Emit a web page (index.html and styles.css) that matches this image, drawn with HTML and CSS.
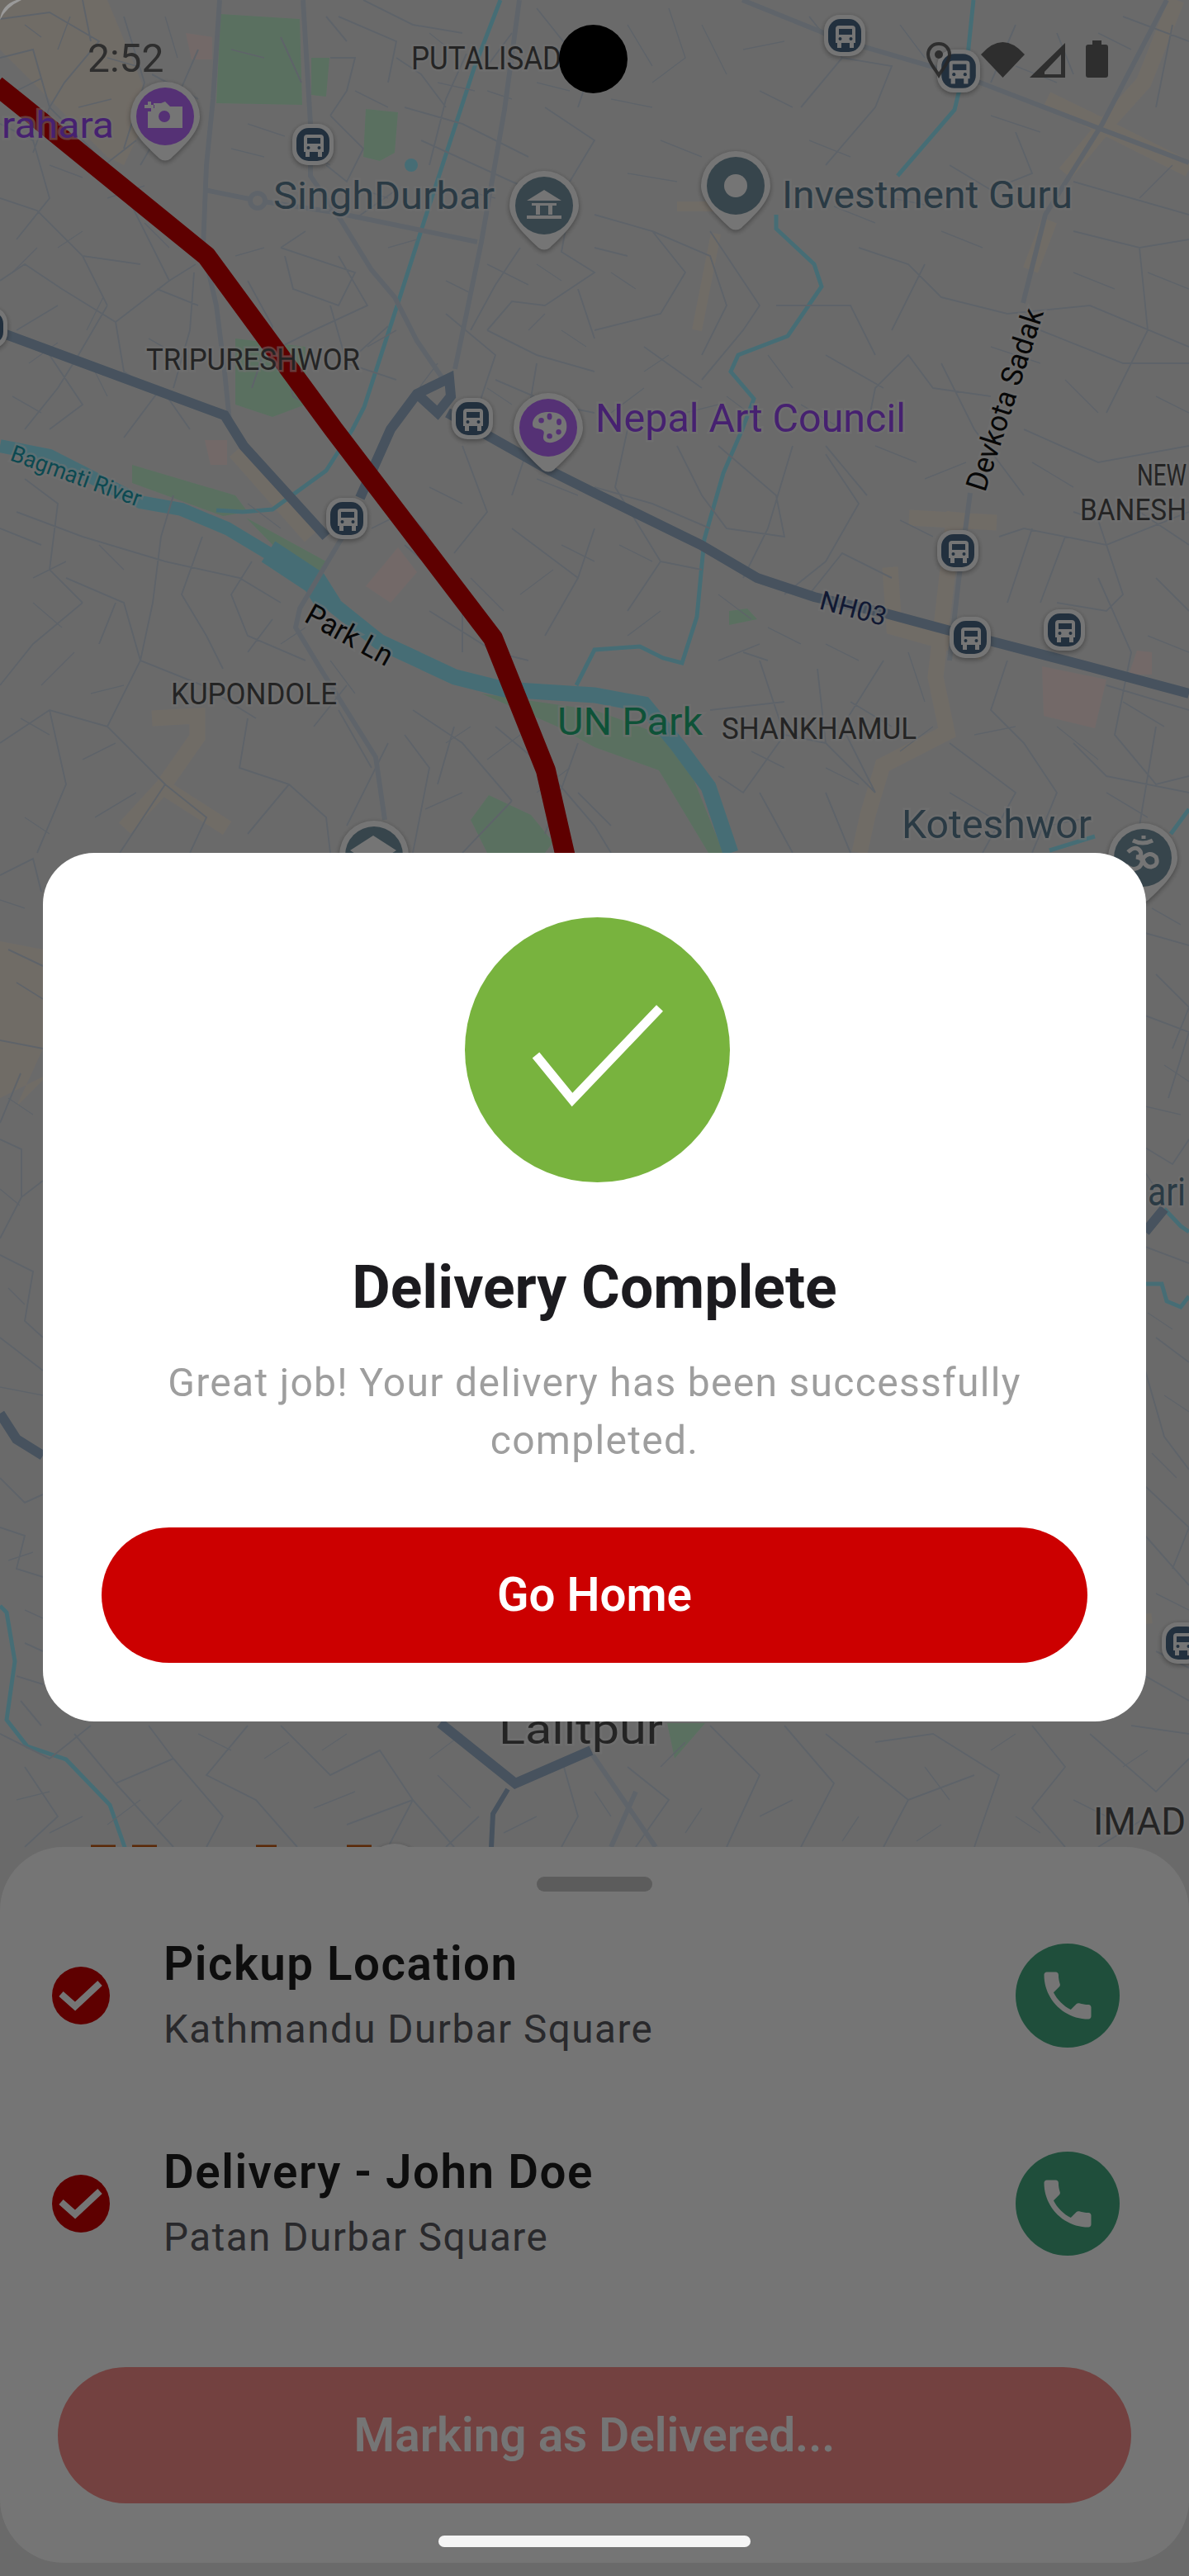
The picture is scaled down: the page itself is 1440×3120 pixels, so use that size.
FILE: index.html
```html
<!DOCTYPE html>
<html lang="en">
<head>
    <meta charset="UTF-8">
    <meta name="viewport" content="width=device-width, initial-scale=1.0">
    <title>Delivery Complete</title>
    <link rel="stylesheet" href="styles.css">
</head>
<body>

<div class="screen">

    <!-- map canvas: everything here sits at its place on the map -->
    <svg class="map" viewBox="0 0 1440 3120" width="1440" height="3120">
        <defs>
            <symbol id="bus" viewBox="0 0 50 50">
                <rect class="marker-ring" width="50" height="50" rx="19"/>
                <rect class="bus-fill" x="5" y="5" width="40" height="40" rx="15"/>
                <path class="marker-ring" d="M14 17q0-4 4-4h16q4 0 4 4v17h-2v6h-5v-6H21v6h-5v-6h-2z"/>
                <rect class="bus-fill" x="18" y="17" width="16" height="7"/>
                <circle class="bus-fill" cx="19.500" cy="29" r="2"/>
                <circle class="bus-fill" cx="32.500" cy="29" r="2"/>
            </symbol>
            <symbol id="pin-purple" viewBox="0 0 84 96">
                <path class="marker-ring" d="M42 0A42 42 0 0 1 84 42C84 62 60 82 49 93Q42 98 35 93C24 82 0 62 0 42A42 42 0 0 1 42 0Z"/>
                <circle class="pin-purple" cx="42" cy="42" r="35"/>
            </symbol>
            <symbol id="pin-slate" viewBox="0 0 84 96">
                <path class="marker-ring" d="M42 0A42 42 0 0 1 84 42C84 62 60 82 49 93Q42 98 35 93C24 82 0 62 0 42A42 42 0 0 1 42 0Z"/>
                <circle class="pin-slate" cx="42" cy="42" r="35"/>
            </symbol>
        </defs>

        <rect class="land" width="1440" height="3120"/>

        <!-- tan, green and pink areas -->
        <path class="area-tan" d="M0 0H130L184 130 150 200 130 190 60 120 0 60Z"/>
        <path class="area-tan" d="M0 1140L52 1150V1270L20 1340 60 1300 0 1330Z"/>
        <path class="street-tan wide" d="M1425 0L1385 100 1340 150 1290 210M1268 120L1340 155 1440 205M1271 267L1248 327M1101 627L1207 633M1156 620L1133 820 1147 887 1069 927 1051 987 1041 1033M1078 687L1083 760 1190 790M285 547L376 650M184 870L239 867 239 893 197 953 151 1003M197 953L275 1003"/>
        <path class="street-tan" d="M867 283L844 400M820 250L880 250M1395 1960L1350 1965"/>
        <path class="area-green" d="M267 17L363 23 366 127 262 125ZM443 132L482 136 478 185 460 195 440 190ZM377 70L399 70 395 117 377 115ZM285 410L370 420 370 490 330 505 285 490ZM160 563L285 600 300 620 270 625 160 585ZM298 627L395 680 385 695 340 670ZM583 840L720 860 821 897 876 1033H858L798 933 720 905 675 880ZM570 993L592 963 643 987 670 1020 660 1033H590ZM883 740L905 737 917 750 883 757ZM808 2087H854L817 2130Z"/>
        <path class="area-pink" d="M225 40L257 45 257 72 232 72ZM248 533L275 533 275 563 255 563ZM482 663L505 693 473 730 443 710ZM1262 807L1340 823 1326 882 1264 867ZM1377 788L1395 790 1395 817 1367 817Z"/>

        <!-- rivers -->
        <path class="river thin" d="M606 0L574 83 514 267 482 367 441 493 427 520 395 570 330 617 294 620 262 618M1179 0L1172 67 1156 133 1087 213M940 260V277L986 320 995 347 954 407 894 430 885 450 913 483 899 520 876 573 853 653 844 747 826 803 803 797 775 783 720 787 698 830M1440 980L1418 1010M1326 1013L1271 1030M1387 1555H1407L1413 1576 1430 1583 1440 1570M1410 1464L1430 1485 1440 1492M0 1945L8 1953 18 2012 8 2083 33 2115 80 2131 133 2186 152 2240"/>
        <path class="river" d="M0 540L60 552 170 608 220 617 275 640 330 673 381 705"/>
        <path class="river wide" d="M381 705L404 733 459 777 551 820 611 835 720 842 780 853 821 903 858 953 885 1033"/>
        <path class="river widest" d="M325 668L381 705 400 735"/>
        <circle class="river-fill" cx="498" cy="200" r="8"/>

        <!-- small streets -->
        <path class="road" d="M0 23L60 15 120 50 78 100 60 130M100 0L110 50M0 70L40 60 60 130 40 185M150 20L175 100 150 180M184 90L240 120M240 60L205 140 170 200M0 150L40 170 60 240 20 290M0 240L45 255 100 310 130 370M130 370L95 430 70 470 30 520M60 130L110 180 160 250 205 340 140 390 75 350 30 320 0 340M120 205L165 170M205 340L237 320M140 390L150 450 180 470M100 310L170 320M20 400L70 370M190 350L240 370M235 330L230 400 210 470M150 530L195 470 230 520M60 430L100 490 60 520M340 45L365 100M410 20L480 50 470 100M440 0L500 30 560 40M400 70L430 70 420 110 400 140M400 140L440 180 420 220 395 200M395 20L420 50M490 130L560 150 640 190M510 170L620 220 690 250M565 65L540 120 520 200M620 40L590 80M480 230L430 265M340 300L430 330 410 370 355 350 345 310M370 280L340 300M410 310L445 370 380 400 340 420M340 420L355 480 390 500M400 370L420 440 480 460M420 440L470 395M300 340L330 395 305 470M480 70L510 90 540 130M650 10L690 60 720 70 700 130M660 130L720 170 690 220M690 250L680 305 720 330 660 370 620 365 590 400M590 400L650 430 720 450M630 300L600 345 570 400M600 460L670 490 720 500M540 380L600 430 570 520M700 350L720 410M650 440L640 500M20 620L100 650 200 680M30 580L70 610 60 690 100 730M100 730L40 780 0 830M0 640L50 660M80 700L150 730 170 800 130 880M200 680L290 700 340 730M210 600L195 650 185 730 170 800M245 650L220 720 250 770 270 810M140 730L120 780M170 800L245 830 310 870M305 680L280 720 300 770 370 800M330 750L300 790M0 900L60 860 130 880 200 950 145 1033M60 860L80 950 45 1033M200 950L250 990 230 1033M300 870L290 930 350 950 395 990 400 1033M350 950L300 1010M420 830L380 880M410 860L450 930M470 900L440 960 420 1000M490 890L520 930 500 1033M500 860L560 900 620 970M550 880L530 950M620 970L560 1033M520 740L600 790 640 800M490 660L560 720 560 790M440 560L520 650M560 540L590 620 550 670M620 640L700 700 660 770M700 700L720 640M640 540L620 600M600 880L660 930 720 1000 740 1033M700 900L660 1010M740 1000L700 960M720 590L790 610 860 640M760 520L745 590 800 680 760 740M800 680L850 690M820 540L850 600 880 640 950 650 940 600 870 540M960 540L930 640 900 700M1000 550L1040 610 1000 680 950 720M1050 600L1000 540M1080 700L1020 670 980 720M1070 800L1020 880 1060 960M990 810L1000 900M1030 850L1080 880M920 800L950 890 900 960 870 940M950 890L1000 900 1060 960M900 790L930 800M860 860L950 850M1000 960L1030 1033M920 960L960 1033M1220 800L1200 860 1240 900 1280 960 1250 1033M1150 900L1230 960 1190 1033M1280 730L1340 740 1360 720 1330 630 1300 620M1330 700L1370 790 1350 890 1400 950 1440 940M1400 700L1440 740M1380 620L1440 660M1210 650L1240 640 1340 660 1440 620M1240 520L1330 560 1440 540M1250 640L1220 730M1290 650L1260 730M1040 300L1100 320 1140 360 1220 380 1320 370 1440 420M1120 320L1080 400M1000 200L1060 130 1080 80 1020 70 970 130M1020 70L980 20M1150 200L1200 230 1250 210 1230 160M1230 30L1200 100M1280 40L1300 90M1300 280L1380 300 1440 290M1380 300L1390 400 1340 500M1260 400L1360 440 1440 440M1200 480L1130 470 1100 430 1060 470 1050 520M1000 430L1070 470M940 370L1030 370 1060 430M850 460L900 400 920 370 860 280M790 280L860 310 880 370 850 430M720 260L790 280 830 330 800 380 720 400M720 300L760 310M780 420L850 470M1140 440L1180 520 1240 600M1420 30L1400 130M1360 20L1440 50M1300 220L1440 260M1340 830L1440 860M1400 880L1380 1000M1300 900L1340 940 1440 960M1387 1130L1440 1145M1400 1180L1440 1220 1420 1270M1387 1230L1440 1250 1415 1330M1387 1390L1420 1410 1440 1380M1387 1510L1440 1530M1400 1620L1440 1650M1387 1660L1410 1740 1440 1780M1387 1800L1440 1850 1420 1900M1387 1860L1440 1920M1387 2030L1440 2060M1400 2000L1440 2020M0 1060L40 1040 50 1080M10 1150L52 1170M0 1260L52 1270M25 1300L0 1360M0 1380L26 1392 26 1450 0 1500M26 1450L52 1430M0 1520L40 1540 30 1600 52 1620M0 1620L52 1660M0 1790L30 1820 52 1810M0 1850L30 1860 20 1900 52 1910M30 1990L52 2000M20 2030L52 2040M25 2060L50 2090"/>
        <path class="road" d="M0 2100L60 2130 110 2090M30 2140L70 2200 30 2237M90 2100L140 2160 210 2130 180 2090M140 2160L210 2237M210 2130L270 2200 250 2237M300 2090L250 2150 310 2180 360 2237M340 2090L400 2150 460 2120 500 2180 470 2237M420 2210L500 2180 550 2237M580 2200L540 2237M680 2130L700 2200 680 2237M760 2140L810 2180 770 2237M860 2090L920 2150 880 2237M950 2090L1010 2160 970 2237M1000 2100L1100 2180 1070 2237M1060 2110L1130 2100 1210 2150 1180 2237M1100 2180L1180 2150M1250 2090L1290 2140 1250 2190 1290 2237M1320 2100L1400 2170 1440 2130M1370 2090L1440 2100M1330 2237L1390 2200"/>
        <!-- short side streets filling the blocks -->
        <path class="road fine" d="M30 30L50 45M85 20L70 60M130 70L165 80M200 20L215 70M20 110L50 95M95 130L135 120M60 200L100 215M130 240L175 225M15 330L45 300M70 300L100 280M175 270L205 300M35 440L70 415M110 440L130 480M180 410L215 430M15 480L50 500M105 400L125 360M280 60L320 70M300 150L345 165M280 180L320 190M285 310L320 300M400 200L365 180M440 230L470 240M430 110L470 130M520 40L545 60M590 110L620 120M530 100L575 110M650 100L690 110M560 230L600 240M640 260L670 240M590 320L640 345M540 340L570 355M650 320L680 340M470 300L505 290M445 420L480 400M500 480L530 440M590 470L620 490M680 400L710 420M640 400L660 380M760 30L790 80M810 10L830 70 790 100M740 120L790 130M850 30L880 90M900 60L950 50M920 110L960 130M800 170L850 190M760 210L820 220M980 170L1030 190M1010 250L1060 270M1080 240L1130 250M1140 280L1190 300M1200 140L1260 160M1090 30L1120 70M1230 80L1280 100M1330 40L1370 60M1380 240L1420 200M1300 330L1350 350M1390 330L1440 350M1200 420L1260 440M1290 460L1330 500M1400 480L1440 500M1060 540L1110 560M1120 580L1170 560M1250 560L1300 590M1090 630L1130 650M930 430L960 470M970 490L1020 520M880 480L920 510M780 470L740 500M830 500L870 490M740 330L770 350M810 430L780 450M40 700L80 680M120 660L150 690M40 730L75 760M90 790L50 830M110 840L150 830M25 870L60 890M100 920L140 900M165 960L115 990M30 990L60 1010M300 610L340 640M340 780L370 760M400 800L430 840M540 900L570 880M590 920L630 890M650 960L690 930M515 980L560 960M570 700L610 740M630 720L670 690M650 580L700 600M450 640L490 620M520 590L560 610M680 660L720 680M750 660L790 680M800 740L760 770M870 720L910 750M870 800L920 780M930 760L970 780M1000 780L1040 800M1100 790L1120 850M1130 880L1090 910M1000 930L1040 950M910 910L950 930M1180 890L1230 880M1280 880L1330 920M1360 850L1410 880M1390 770L1440 790M1340 960L1390 990M1150 960L1200 990M1270 1000L1320 990"/>
        <path class="road fine" d="M0 1090L30 1100M20 1190L52 1210M10 1330L40 1350M0 1440L24 1460M10 1560L30 1580M0 1680L52 1690M10 1890L40 1880M30 1950L52 1960M1395 1100L1430 1120M1410 1290L1440 1310M1387 1340L1430 1350M1400 1440L1387 1420M1390 1590L1420 1610M1410 1690L1440 1710M1395 1760L1425 1790M1400 1930L1440 1950M20 2180L60 2170M60 2220L100 2200M170 2180L130 2210M240 2100L280 2120M320 2130L350 2110M380 2190L430 2170M530 2150L570 2190M560 2100L520 2130M650 2200L610 2220M740 2200L720 2170M830 2110L800 2140M850 2190L830 2220M920 2200L960 2180M1040 2200L1020 2230M1120 2140L1150 2180M1230 2100L1200 2120M1300 2180L1340 2200M1390 2120L1360 2140M1140 2210L1110 2230M220 2180L190 2210M420 2100L390 2120M1260 2220L1230 2200"/>
        <path class="road-main" d="M266 0L258 120 250 200 246 300 262 370 272 450 278 510M367 0L376 150 376 213 413 267 450 327 478 360 505 413 542 467M629 0L611 133 583 293 551 447M248 230L312 243 404 257 578 293M899 0L1023 50 1161 90 1335 157 1440 197M1413 0L1335 150 1266 260 1239 367M1175 597L1161 703 1150 800M415 650L363 737 358 760 390 813 455 917 466 993M716 2123L794 2237M770 2170L740 2237"/>
        <circle class="road-ring" cx="312" cy="243" r="9"/>

        <!-- highways and the route -->
        <path class="highway" d="M-20 395L272 503 295 540 395 650M436 603L473 520 505 477 544 458 546 480 530 500 505 477M542 500L666 570 720 597 849 660 917 700 986 723 1073 743 1147 763 1202 777 1317 807 1440 840M0 1712L20 1743 52 1763M1387 1492L1410 1464M533 2087L624 2160 716 2120"/>
        <path class="highway thin" d="M615 2167L597 2197 595 2238"/>
        <path class="route" d="M-5 103L25 127 250 310 404 520 597 773 661 933 690 1060"/>
        <path class="brown-mark" d="M110 2236H140M160 2236H190M310 2236H335M420 2236H450"/>

        <!-- labels -->
        <text class="label purple" x="2" y="167" font-size="44" textLength="136" lengthAdjust="spacingAndGlyphs">rahara</text>
        <text class="label dark" x="498" y="84" font-size="38" textLength="182" lengthAdjust="spacingAndGlyphs">PUTALISAD</text>
        <text class="label slate" x="331" y="253" font-size="47" textLength="268" lengthAdjust="spacingAndGlyphs">SinghDurbar</text>
        <text class="label dark" x="177" y="448" font-size="36" textLength="259" lengthAdjust="spacingAndGlyphs">TRIPURESHWOR</text>
        <text class="label slate" x="947" y="252" font-size="46" textLength="352" lengthAdjust="spacingAndGlyphs">Investment Guru</text>
        <text class="label purple" x="721" y="523" font-size="48" textLength="376" lengthAdjust="spacingAndGlyphs">Nepal Art Council</text>
        <text class="label black" transform="translate(1193 597) rotate(-72)" font-size="36" textLength="230" lengthAdjust="spacingAndGlyphs">Devkota Sadak</text>
        <text class="label teal" transform="translate(11 557) rotate(20)" font-size="28" textLength="166" lengthAdjust="spacingAndGlyphs">Bagmati River</text>
        <text class="label black" transform="translate(367 752) rotate(29)" font-size="36" textLength="115" lengthAdjust="spacingAndGlyphs">Park Ln</text>
        <text class="label dark" x="207" y="853" font-size="36" textLength="201" lengthAdjust="spacingAndGlyphs">KUPONDOLE</text>
        <text class="label green" x="675" y="890" font-size="46" textLength="176" lengthAdjust="spacingAndGlyphs">UN Park</text>
        <text class="label dark" x="874" y="895" font-size="36" textLength="236" lengthAdjust="spacingAndGlyphs">SHANKHAMUL</text>
        <text class="label navy" transform="translate(991 737) rotate(15)" font-size="32" textLength="82" lengthAdjust="spacingAndGlyphs">NH03</text>
        <text class="label dark" x="1377" y="588" font-size="36" textLength="60" lengthAdjust="spacingAndGlyphs">NEW</text>
        <text class="label dark" x="1308" y="630" font-size="36" textLength="129" lengthAdjust="spacingAndGlyphs">BANESH</text>
        <text class="label slate" x="1092" y="1015" font-size="48" textLength="230" lengthAdjust="spacingAndGlyphs">Koteshwor</text>
        <text class="label slate" x="1390" y="1460" font-size="48" textLength="46" lengthAdjust="spacingAndGlyphs">ari</text>
        <text class="label dark" x="604" y="2112" font-size="50" textLength="199" lengthAdjust="spacingAndGlyphs">Lalitpur</text>
        <text class="label dark" x="1324" y="2222" font-size="46" textLength="112" lengthAdjust="spacingAndGlyphs">IMAD</text>

        <!-- markers -->
        <g class="marker">
            <use href="#bus" x="354" y="150" width="50" height="50"/>
            <use href="#bus" x="998" y="18" width="50" height="50"/>
            <use href="#bus" x="1135" y="60" width="52" height="52"/>
            <use href="#bus" x="-41" y="372" width="50" height="50"/>
            <use href="#bus" x="547" y="482" width="50" height="50"/>
            <use href="#bus" x="395" y="603" width="50" height="50"/>
            <use href="#bus" x="1135" y="642" width="50" height="50"/>
            <use href="#bus" x="1150" y="747" width="50" height="50"/>
            <use href="#bus" x="1264" y="738" width="50" height="50"/>
            <use href="#bus" x="1407" y="1965" width="50" height="50"/>
            <circle class="marker-ring" cx="478" cy="2271" r="38"/>

            <use href="#pin-purple" x="158" y="99" width="84" height="96"/>
            <use href="#pin-slate" x="617" y="207" width="84" height="96"/>
            <use href="#pin-slate" x="849" y="183" width="84" height="96"/>
            <use href="#pin-purple" x="622" y="476" width="84" height="96"/>
            <use href="#pin-slate" x="411" y="994" width="84" height="96"/>
            <use href="#pin-slate" x="1342" y="997" width="84" height="96"/>
        </g>

        <!-- glyphs inside the pins -->
        <path class="glyph" fill-rule="evenodd" d="M179 131H186V125H195L200 123 206 129H221V155H179ZM199 134A7 7 0 1 0 199.100 148 7 7 0 1 0 199 134ZM179 123H183V127H187V131H183V135H179V131H175V127H179Z"/>
        <path class="glyph" d="M659 230L680 243H638ZM644 246H674V249H644ZM649 249H654V260H649ZM664 249H669V260H664ZM638 261H680V265H638Z"/>
        <circle class="glyph" cx="891" cy="225" r="14"/>
        <path class="glyph" fill-rule="evenodd" d="M665 499C650 499 645 507 645 514 645 520 652 518 657 521 662 524 654 530 661 535 668 539 684 532 686 520 688 507 680 499 665 499ZM655.500 506A3.300 3.300 0 1 0 655.600 512.600 3.300 3.300 0 1 0 655.500 506ZM665.500 500.500A3 4 0 1 0 665.600 508.500 3 4 0 1 0 665.500 500.500ZM677 507A3 4 0 1 0 677.100 515 3 4 0 1 0 677 507ZM676.500 520A3.200 3.200 0 1 0 676.600 526.400 3.200 3.200 0 1 0 676.500 520ZM665.500 525A3.300 3.300 0 1 0 665.600 531.600 3.300 3.300 0 1 0 665.500 525Z"/>
        <path class="glyph" d="M452 1012L480 1030 452 1048 424 1030Z"/>
        <path class="glyph-line" d="M1366 1032Q1376 1023 1381 1031 1384 1038 1376 1038 1388 1040 1380 1050 1372 1056 1364 1048M1384 1040Q1392 1030 1400 1038 1404 1048 1394 1050 1386 1050 1384 1040M1372 1018Q1384 1024 1396 1018M1385 1012V1016"/>
    </svg>

    <!-- bottom sheet behind the dialog -->
    <section class="sheet">
        <div class="sheet-handle"></div>

        <div class="stop">
            <svg class="stop-check" viewBox="0 0 70 70"><circle class="check-bg" cx="35" cy="35" r="35"/><path class="check-tick" d="M11 33L28 48 58 20"/></svg>
            <div class="stop-text">
                <div class="stop-title">Pickup Location</div>
                <div class="stop-place">Kathmandu Durbar Square</div>
            </div>
            <div class="call-btn">
                <svg viewBox="0 0 24 24" width="76" height="76"><path class="call-icon" d="M6.620 10.790c1.440 2.830 3.760 5.140 6.590 6.590l2.200-2.200c.27-.27.67-.36 1.020-.24 1.120.37 2.330.57 3.570.57.55 0 1 .45 1 1V20c0 .55-.45 1-1 1-9.390 0-17-7.610-17-17 0-.55.45-1 1-1h3.500c.55 0 1 .45 1 1 0 1.250.2 2.450.57 3.570.11.35.03.74-.25 1.020l-2.200 2.200z"/></svg>
            </div>
        </div>

        <div class="stop">
            <svg class="stop-check" viewBox="0 0 70 70"><circle class="check-bg" cx="35" cy="35" r="35"/><path class="check-tick" d="M11 33L28 48 58 20"/></svg>
            <div class="stop-text">
                <div class="stop-title">Delivery - John Doe</div>
                <div class="stop-place">Patan Durbar Square</div>
            </div>
            <div class="call-btn">
                <svg viewBox="0 0 24 24" width="76" height="76"><path class="call-icon" d="M6.620 10.790c1.440 2.830 3.760 5.140 6.590 6.590l2.200-2.200c.27-.27.67-.36 1.020-.24 1.120.37 2.330.57 3.570.57.55 0 1 .45 1 1V20c0 .55-.45 1-1 1-9.390 0-17-7.610-17-17 0-.55.45-1 1-1h3.500c.55 0 1 .45 1 1 0 1.250.2 2.450.57 3.570.11.35.03.74-.25 1.020l-2.200 2.200z"/></svg>
            </div>
        </div>

        <div class="marking-btn">Marking as Delivered...</div>
    </section>

    <div class="scrim"></div>

    <div class="status-bar">
        <span class="time">2:52</span>
        <div class="camera"></div>
        <svg class="status-icons" viewBox="1122 45 223 52" width="223" height="52">
            <path class="pin-outline" d="M1137 53C1129 53 1124 59 1124 66 1124 75 1133 84 1137 91 1141 84 1150 75 1150 66 1150 59 1145 53 1137 53Z"/>
            <circle class="status-fill" cx="1137" cy="66" r="5"/>
            <path class="status-fill" d="M1188 66Q1214.500 36 1241 66L1214.500 94Z"/>
            <path class="status-fill" fill-rule="evenodd" d="M1290 52V94H1247ZM1285 66L1265 87V90H1285Z"/>
            <path class="status-fill" d="M1323 49H1334V54H1339Q1342 54 1342 57V91Q1342 94 1339 94H1318Q1315 94 1315 91V57Q1315 54 1318 54H1323Z"/>
        </svg>
    </div>

    <svg class="corner-glint" viewBox="0 0 26 24" width="26" height="24"><path d="M0 24Q2 6 20 0H26Q8 8 0 24Z"/></svg>

    <div class="dialog-wrap">
        <div class="dialog">
            <svg class="done-badge" viewBox="0 0 321 321"><circle class="done-circle" cx="160.500" cy="160.500" r="160.500"/><path class="done-tick" d="M86 167L130 221 236 110"/></svg>
            <h2 class="dialog-title">Delivery Complete</h2>
            <p class="dialog-text">Great job! Your delivery has been successfully completed.</p>
            <div class="home-btn">Go Home</div>
        </div>
    </div>

    <div class="home-indicator"></div>
</div>

</body>
</html>
```

FILE: styles.css
```css
* {
    box-sizing: border-box;
}

body {
    margin: 0;
    font-family: 'Roboto', 'Liberation Sans', sans-serif;
}

.screen {
    position: relative;
    width: 1440px;
    height: 3120px;
    overflow: hidden;
}

/* map */
.map {
    position: absolute;
    top: 0;
    left: 0;
}

.land { fill: #e8e8e8; }
.area-tan { fill: #f5ebde; }
.area-green { fill: #c4f5d2; }
.area-pink { fill: #fbe4e2; }

.street-tan {
    fill: none;
    stroke: #f5ebde;
    stroke-width: 12;
}

.street-tan.wide { stroke-width: 19; }

.river {
    fill: none;
    stroke: #9aeeff;
    stroke-width: 16;
}

.river.thin { stroke-width: 5; }
.river.wide { stroke-width: 19; }
.river.widest { stroke-width: 30; }
.river-fill { fill: #9aeeff; }

.road {
    fill: none;
    stroke: #ced8e4;
    stroke-width: 2;
}

.road.fine { stroke-width: 1.500; }

.road-main {
    fill: none;
    stroke: #d0dbe6;
    stroke-width: 6;
}

.road-ring {
    fill: #e8e8e8;
    stroke: #d0dbe6;
    stroke-width: 6;
}

.highway {
    fill: none;
    stroke: #9bb3cc;
    stroke-width: 12;
}

.highway.thin { stroke-width: 6; }

.route {
    fill: none;
    stroke: #cc0000;
    stroke-width: 24;
    stroke-linejoin: round;
}

.brown-mark {
    fill: none;
    stroke: #c4570f;
    stroke-width: 3;
}

.label {
    font-family: 'Roboto', sans-serif;
    stroke: rgba(245, 245, 245, 0.55);
    stroke-width: 5;
    paint-order: stroke;
}

.purple { fill: #9a48f5; }
.slate { fill: #5c7f94; }
.dark { fill: #505050; }
.black { fill: #111111; }
.teal { fill: #1b9fb0; }
.green { fill: #1fb37a; }
.navy { fill: #26386f; }

.marker {
    filter: drop-shadow(0 2px 3px rgba(0, 0, 0, 0.35));
}

.marker-ring { fill: #ffffff; }
.bus-fill { fill: #4a6987; }
.pin-purple { fill: #b96cff; }
.pin-slate { fill: #7896a5; }
.glyph { fill: #ffffff; }

.glyph-line {
    fill: none;
    stroke: #ffffff;
    stroke-width: 5;
}

/* bottom sheet */
.sheet {
    position: absolute;
    top: 2237px;
    left: 0;
    width: 1440px;
    height: 867px;
    padding: 36px 84px 0 63px;
    background: #ffffff;
    border-radius: 77px;
    display: flex;
    flex-direction: column;
}

.sheet-handle {
    align-self: center;
    width: 140px;
    height: 18px;
    margin-left: 21px;
    border-radius: 9px;
    background: #c8c8c8;
}

.stop {
    display: flex;
    align-items: center;
    height: 126px;
    margin-top: 63px;
}

.stop + .stop {
    margin-top: 126px;
}

.stop-check {
    width: 70px;
    height: 70px;
    flex-shrink: 0;
}

.check-bg { fill: #cc0000; }

.check-tick {
    fill: none;
    stroke: #ffffff;
    stroke-width: 8;
}

.stop-text {
    flex: 1;
    margin-left: 65px;
}

.stop-title {
    font-size: 56.500px;
    font-weight: 600;
    line-height: 72px;
    letter-spacing: 1.500px;
    color: #1e1e1e;
}

.stop-place {
    margin-top: 10px;
    font-size: 47.600px;
    line-height: 66px;
    letter-spacing: 1.500px;
    color: #5a5a60;
}

.call-btn {
    width: 126px;
    height: 126px;
    border-radius: 50%;
    background: #44ab80;
    display: flex;
    align-items: center;
    justify-content: center;
}

.call-icon { fill: #ffffff; }

.marking-btn {
    margin: 135px -14px 0 7px;
    height: 165px;
    border-radius: 83px;
    background: #fa8f8b;
    display: flex;
    align-items: center;
    justify-content: center;
    color: #ffffff;
    font-size: 56.700px;
    font-weight: 600;
}

.scrim {
    position: absolute;
    top: 0;
    left: 0;
    width: 1440px;
    height: 3120px;
    background: rgba(0, 0, 0, 0.54);
}

/* status bar */
.status-bar {
    position: absolute;
    top: 0;
    left: 0;
    width: 1440px;
    padding: 30px 95px 0 106px;
    display: grid;
    grid-template-columns: 571px 83px 1fr;
    align-items: start;
}

.time {
    margin-top: 14px;
    font-size: 48px;
    line-height: 54px;
    color: #2e2e2e;
}

.camera {
    width: 83px;
    height: 83px;
    border-radius: 50%;
    background: #000000;
}

.status-icons {
    justify-self: end;
    margin-top: 15px;
}

.pin-outline {
    fill: none;
    stroke: rgba(40, 40, 40, 0.9);
    stroke-width: 4;
}

.status-fill { fill: #2e2e2e; }

.corner-glint {
    position: absolute;
    top: 0;
    left: 0;
    fill: #9a9a9a;
}

/* dialog */
.dialog-wrap {
    position: absolute;
    top: 1033px;
    left: 52px;
    width: 1336px;
}

.dialog {
    height: 1052px;
    padding: 78px 71px 0;
    border-radius: 62px;
    background: #ffffff;
    display: flex;
    flex-direction: column;
    align-items: center;
}

.done-badge {
    width: 321px;
    height: 321px;
    flex-shrink: 0;
    margin-left: 7px;
}

.done-circle { fill: #78b33e; }

.done-tick {
    fill: none;
    stroke: #ffffff;
    stroke-width: 11;
}

.dialog-title {
    margin: 86px 0 0;
    font-size: 71.500px;
    font-weight: 700;
    line-height: 84px;
    color: #1c1b1f;
}

.dialog-text {
    margin: 38px 0 0;
    width: 1100px;
    text-align: center;
    font-size: 48px;
    line-height: 70px;
    letter-spacing: 1.300px;
    color: #9e9e9e;
}

.home-btn {
    margin-top: 70px;
    width: 100%;
    height: 164px;
    border-radius: 82px;
    background: #cc0000;
    display: flex;
    align-items: center;
    justify-content: center;
    color: #ffffff;
    font-size: 56.500px;
    font-weight: 600;
}

.home-indicator {
    position: absolute;
    top: 3071px;
    left: 531px;
    width: 378px;
    height: 14px;
    border-radius: 7px;
    background: #f5f5f5;
}
```
